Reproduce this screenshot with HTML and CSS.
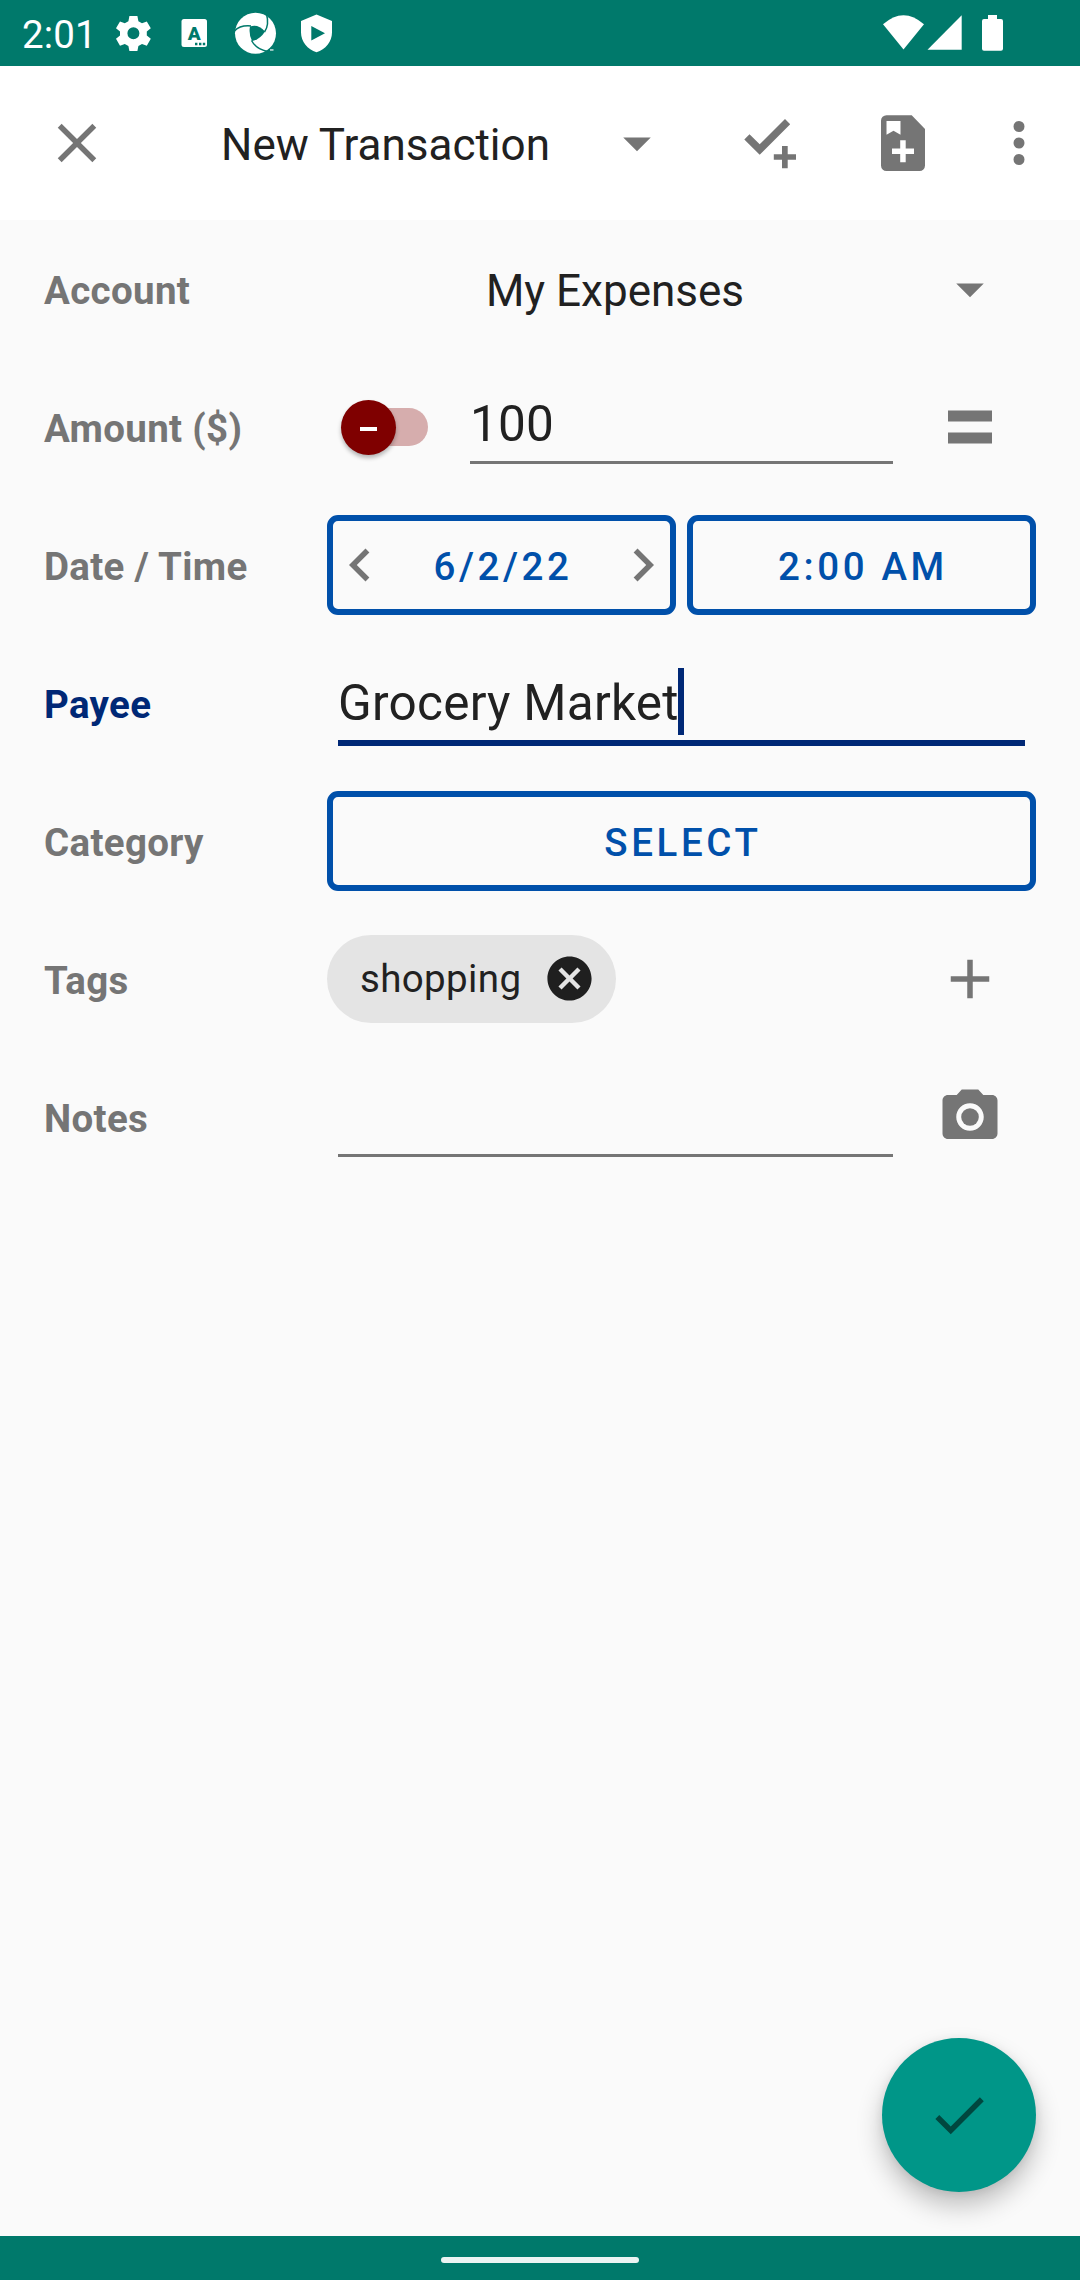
FILE: index.html
```html
<!DOCTYPE html>
<html lang="en">
<head>
<meta charset="utf-8">
<title>New Transaction</title>
<link rel="stylesheet" href="styles.css">
</head>
<body>
<div class="screen">
  <header class="status-bar">
    <span class="clock">2:01</span>
    <svg class="status-left" viewBox="110 0 230 66" width="230" height="66" fill="#fff">
      <path fill-rule="evenodd" d="M129.4 16h8l1 5.2 3.6 2 4.8-1.8 4 6.8-4 3.3v4l4 3.3-4 6.900-4.800-1.700-3.600 2-1 5h-8l-1-5-3.600-2-4.800 1.700-4-6.900 4-3.300v-4l-4-3.300 4-6.800 4.800 1.800 3.600-2zM133.400 27.300a6 6 0 1 0 0 12 6 6 0 0 0 0-12z"/>
      <rect x="181.500" y="19" width="25.500" height="28" rx="2.500"/>
      <text class="badge-letter" x="194.300" y="40.200" text-anchor="middle">A</text>
      <path fill="#00796b" d="M195 42.800h2.400v2.400H195zM199 42.800h2.400v2.400H199zM202.800 42.800h2.400v2.400h-2.400z"/>
      <circle cx="255.500" cy="33.300" r="20.500"/>
      <path fill="#00796b" d="M250 26.500Q258 23.500 265 31.500Q260 39.500 252 41Q248.500 34 250 26.500z"/>
      <g fill="none" stroke="#00796b" stroke-width="1.500">
        <path d="M234.500 31Q240 25 251 26"/>
        <path d="M264.500 32Q269.500 25 266.500 14"/>
        <path d="M251.500 40.500Q256 49 267.500 51.500"/>
      </g>
      <path d="M270 49.200h3.500v1.500H270z" opacity=".8"/>
      <path fill-rule="evenodd" d="M316.500 14.500l15.500 6.500v11.500c0 9-6.500 17-15.500 19.700-9-2.700-15.500-10.700-15.500-19.700V21zM311.300 26v14.500l13.700-7.200z"/>
    </svg>
    <svg class="status-right" viewBox="880 0 126 66" width="126" height="66" fill="#fff">
      <path d="M883 24.300Q903.500 6 924 24.300L903.500 49.500z"/>
      <path d="M961.700 15.300V49.700H927.500z"/>
      <path d="M988 15h9v4h4q2 0 2 2v27.700q0 2-2 2h-17q-2 0-2-2V21q0-2 2-2h4z"/>
    </svg>
  </header>

  <div class="app-bar">
    <svg class="icon close" viewBox="0 0 24 24"><path d="M19 6.410L17.590 5 12 10.590 6.410 5 5 6.410 10.590 12 5 17.590 6.410 19 12 13.410 17.590 19 19 17.590 13.410 12z"/></svg>
    <div class="title">New Transaction</div>
    <svg class="icon title-arrow" viewBox="0 0 24 24"><path d="M7 10l5 5 5-5z"/></svg>
    <svg class="icon save-new" viewBox="737 110 66 66"><path d="M744.300 139.500l5.200-5.200 10.200 10 25.300-25.200 5.200 5.200-30.500 30.400zM782 146h5.700v8.200H796v5.500h-8.300v8.500H782v-8.500h-8.200v-5.500h8.200z"/></svg>
    <svg class="icon template" viewBox="870 110 66 66"><path fill-rule="evenodd" d="M886.500 115.200H911.700L925 129v36.500a5.500 5.500 0 0 1-5.500 5.500h-33a5.500 5.500 0 0 1-5.500-5.500v-44.800a5.500 5.500 0 0 1 5.500-5.500zM886.500 121v13.700l7-4 7 4V121zM900.200 140.300v8.200H892v5.500h8.200v8.300h5.500V154h8.300v-5.500h-8.300v-8.200z"/></svg>
    <svg class="icon more" viewBox="0 0 24 24"><path d="M12 8a2 2 0 1 0 0-4 2 2 0 0 0 0 4zm0 2a2 2 0 1 0 0 4 2 2 0 0 0 0-4zm0 6a2 2 0 1 0 0 4 2 2 0 0 0 0-4z"/></svg>
  </div>

  <main class="form">
    <div class="row">
      <div class="label">Account</div>
      <div class="spinner-text">My Expenses</div>
      <div class="action"><svg class="icon" viewBox="0 0 24 24"><path d="M7 10l5 5 5-5z"/></svg></div>
    </div>
    <div class="row">
      <div class="label">Amount ($)</div>
      <div class="switch"><div class="track"></div><div class="thumb"><span class="minus"></span></div></div>
      <div class="field amount">100</div>
      <div class="action"><svg class="icon" viewBox="0 0 24 24"><path d="M4 6h16v4H4zM4 14h16v4H4z"/></svg></div>
    </div>
    <div class="row">
      <div class="label">Date / Time</div>
      <div class="buttons">
        <div class="button date">
          <svg class="icon" viewBox="0 0 24 24"><path d="M15.410 7.410L14 6l-6 6 6 6 1.410-1.410L10.830 12z"/></svg>
          <span class="button-text">6/2/22</span>
          <svg class="icon" viewBox="0 0 24 24"><path d="M10 6L8.590 7.410 13.170 12l-4.580 4.590L10 18l6-6z"/></svg>
        </div>
        <div class="button"><span class="button-text">2:00 AM</span></div>
      </div>
    </div>
    <div class="row">
      <div class="label active">Payee</div>
      <div class="field payee">Grocery Market<span class="cursor"></span></div>
    </div>
    <div class="row">
      <div class="label">Category</div>
      <div class="buttons"><div class="button"><span class="button-text">SELECT</span></div></div>
    </div>
    <div class="row">
      <div class="label">Tags</div>
      <div class="tags">
        <div class="chip"><span class="chip-text">shopping</span>
          <svg class="chip-close" viewBox="0 0 24 24"><path d="M12 2C6.470 2 2 6.470 2 12s4.470 10 10 10 10-4.470 10-10S17.530 2 12 2zm5 13.590L15.590 17 12 13.410 8.410 17 7 15.590 10.590 12 7 8.410 8.410 7 12 10.590 15.590 7 17 8.410 13.410 12z"/></svg>
        </div>
      </div>
      <div class="action"><svg class="icon" viewBox="0 0 24 24"><path d="M19 13h-6v6h-2v-6H5v-2h6V5h2v6h6z"/></svg></div>
    </div>
    <div class="row">
      <div class="label">Notes</div>
      <div class="field notes"></div>
      <div class="action"><svg class="icon" viewBox="0 0 24 24"><circle cx="12" cy="12" r="3.200"/><path d="M9 2L7.170 4H4c-1.100 0-2 .9-2 2v12c0 1.100.9 2 2 2h16c1.100 0 2-.9 2-2V6c0-1.100-.9-2-2-2h-3.170L15 2H9zm3 15c-2.760 0-5-2.240-5-5s2.240-5 5-5 5 2.240 5 5-2.240 5-5 5z"/></svg></div>
    </div>
  </main>

  <div class="fab"><svg class="fab-icon" viewBox="0 0 24 24"><path d="M9 16.170L4.830 12l-1.420 1.410L9 19 21 7l-1.410-1.410z"/></svg></div>
  <footer class="nav-bar"><div class="handle"></div></footer>
</div>
</body>
</html>
```
FILE: styles.css
```css
* { box-sizing: border-box; }
body { margin: 0; font-family: Roboto, "Liberation Sans", sans-serif; color: #212121; }
svg { display: block; flex: none; }
.screen {
  position: relative;
  display: flex;
  flex-direction: column;
  width: 1080px;
  height: 2280px;
  overflow: hidden;
  background: #fafafa;
}

.status-bar {
  display: flex;
  align-items: center;
  height: 66px;
  padding: 0 74px 0 22px;
  background: #00796b;
  color: #fff;
}
.clock { width: 88px; padding-top: 2px; font-size: 38.5px; line-height: 45px; letter-spacing: .1px; white-space: nowrap; }
.status-right { margin-left: auto; }
.badge-letter { fill: #00796b; font-size: 19px; font-weight: 900; }

.app-bar {
  display: flex;
  align-items: center;
  height: 154px;
  padding-left: 44px;
  background: #fff;
}
.icon { width: 66px; height: 66px; fill: #757575; }
.title { width: 383px; margin-left: 111px; padding-top: 4px; font-size: 44px; line-height: 52px; white-space: nowrap; }
.save-new { margin-left: 67px; }
.template { margin-left: 67px; }
.more { margin-left: 50px; }

.form { flex: 1; padding: 0 44px; }
.row { display: flex; align-items: center; height: 138px; }
.label {
  width: 283px;
  padding-top: 4px;
  color: #757575;
  font-size: 38.5px;
  font-weight: 700;
  line-height: 46px;
  letter-spacing: .32px;
  white-space: nowrap;
}
.label.active { color: #002876; }
.spinner-text { flex: 1; padding: 4px 1px 0 0; font-size: 44px; line-height: 52px; text-align: center; }
.action { display: flex; justify-content: center; width: 132px; }

.switch { display: flex; align-items: center; width: 143px; padding-left: 13px; }
.track { width: 76px; height: 38px; margin-left: 12px; border-radius: 19px; background: #d6adad; }
.thumb {
  display: flex;
  align-items: center;
  justify-content: center;
  width: 55px;
  height: 55px;
  margin-left: -87.5px;
  border-radius: 50%;
  background: #7f0000;
  box-shadow: 0 3px 4px rgba(0, 0, 0, .28);
}
.minus { width: 17px; height: 4px; margin-top: 3px; background: #fff; }

.field { font-size: 49.5px; line-height: 58px; white-space: nowrap; }
.amount { width: 423px; height: 73px; margin-right: 11px; padding-top: 4px; border-bottom: 3px solid #757575; letter-spacing: .2px; }
.payee {
  position: relative;
  width: 687px;
  height: 82px;
  margin: 4px 0 0 11px;
  padding-top: 10px;
  border-bottom: 6px solid #002876;
  letter-spacing: .25px;
}
.cursor { position: absolute; left: 340px; top: 4px; width: 6px; height: 67px; background: #002876; }
.notes { width: 555px; height: 74px; margin: 6px 11px 0 11px; border-bottom: 3px solid #757575; }

.buttons { display: flex; flex: 1; gap: 11px; }
.button {
  display: flex;
  flex: 1;
  align-items: center;
  justify-content: center;
  height: 100px;
  border: 6px solid #0050aa;
  border-radius: 11px;
}
.button.date { justify-content: space-between; }
.date .icon { margin: 0 -6px; }
.button-text {
  padding: 4px 0 0 3px;
  color: #0050aa;
  font-size: 38.5px;
  font-weight: 500;
  line-height: 46px;
  letter-spacing: 3.6px;
  white-space: nowrap;
}

.tags { flex: 1; }
.chip {
  display: flex;
  align-items: center;
  width: 289px;
  height: 88px;
  margin-bottom: 1px;
  padding-left: 33px;
  border-radius: 44px;
  background: #e4e4e4;
}
.chip-text { width: 183px; font-size: 38.5px; line-height: 46px; letter-spacing: .36px; }
.chip-close { width: 53px; height: 53px; fill: #1f1f1f; }

.fab {
  position: absolute;
  left: 882px;
  top: 2038px;
  display: flex;
  align-items: center;
  justify-content: center;
  width: 154px;
  height: 154px;
  border-radius: 50%;
  background: #009688;
  box-shadow: 0 14px 26px rgba(0, 0, 0, .24), 0 2px 10px rgba(0, 0, 0, .08);
}
.fab-icon { width: 66px; height: 66px; fill: #00473f; }
.nav-bar { display: flex; justify-content: center; height: 44px; padding-top: 21px; background: #00796b; }
.handle { width: 198px; height: 6px; border-radius: 3px; background: #ebf4f3; }
```
